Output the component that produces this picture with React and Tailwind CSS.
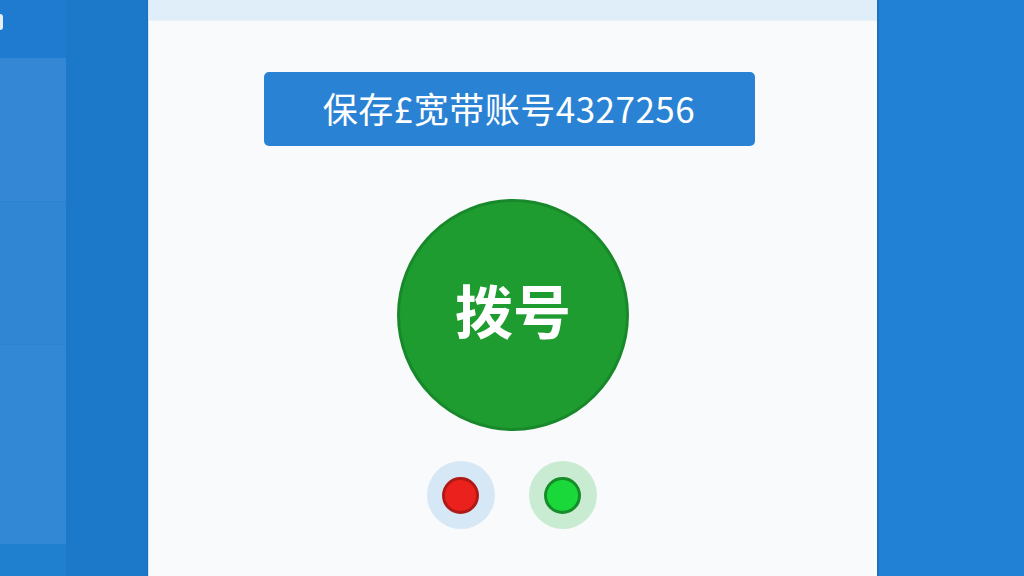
export default function App() {
  return (
    <div className="w-[1024px] h-[576px] flex bg-[#2080d2] overflow-hidden" style={{ fontFamily: '"Noto Sans CJK SC", "Noto Sans", sans-serif' }}>
      {/* left sidebar */}
      <div className="w-[66px] h-full flex flex-col bg-[#1f7ccf] relative">
        <div className="h-[58px] bg-[#1f7bcf]" />
        <div className="h-[143px] bg-[#3387d5]" />
        <div className="h-[143px] bg-[#3186d4] border-t border-[#2d82d0]" />
        <div className="h-[200px] bg-[#3388d5] border-t border-[#2d82d0]" />
        <div className="flex-1 bg-[#1f80cf]" />
        <div className="absolute left-0 top-[14px] w-[3px] h-[16px] bg-[#e8eef5] rounded-r" />
      </div>
      <div className="w-[82px] h-full bg-[#1c78c9] border-r border-[#1a6fb9]" />
      {/* main card */}
      <div className="w-[729px] h-full bg-[#f8fafb] flex flex-col border-l border-[#d6e6f3]">
        <div className="h-[21px] bg-[#dfeef8] border-b border-[#e8f1f8]" />
        <div className="flex flex-col items-center">
          <div className="mt-[51px] mr-[8px] w-[491px] h-[74px] bg-[#2a82d4] rounded-[5px] flex items-center justify-center pb-[2px] text-white text-[35px] tracking-[0.5px]">
            保存£宽带账号4327256
          </div>
          <div className="mt-[53px] w-[232px] h-[232px] rounded-full bg-[#1f9c30] border-[3px] border-[#18892a] flex items-center justify-center pb-[12px] text-white text-[58px] font-bold">
            拨号
          </div>
          <div className="mt-[30px] flex gap-[34px] mr-[3px]">
            <div className="w-[68px] h-[68px] rounded-full bg-[#d6e7f6] flex items-center justify-center">
              <div className="w-[37px] h-[37px] rounded-full bg-[#ea211c] border-[3px] border-[#b01a16]" />
            </div>
            <div className="w-[68px] h-[68px] rounded-full bg-[#c9ebd1] flex items-center justify-center">
              <div className="w-[37px] h-[37px] rounded-full bg-[#1bd83a] border-[3px] border-[#168c2a]" />
            </div>
          </div>
        </div>
      </div>
      <div className="flex-1 h-full bg-[#2181d4] border-l-2 border-[#1c72c0]" />
    </div>
  );
}
